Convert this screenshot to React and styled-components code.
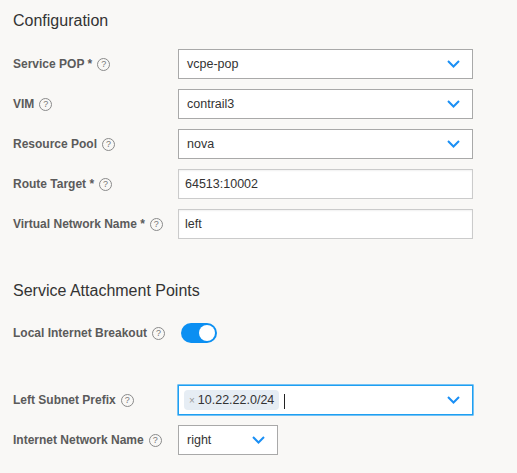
import styled, { createGlobalStyle } from "styled-components";

const GlobalStyle = createGlobalStyle`
  html, body {
    margin: 0;
    padding: 0;
    background: #f9f8f6;
    font-family: "Liberation Sans", Arial, sans-serif;
  }
`;

const Page = styled.div`
  padding: 11px 0 0 13px;
  width: 517px;
  box-sizing: border-box;
`;

const SectionTitle = styled.div`
  font-size: 16px;
  line-height: 20px;
  color: #333;
  margin-bottom: ${(p) => p.$gap || 18}px;
`;

const Rows = styled.div`
  display: flex;
  flex-direction: column;
  gap: 10px;
`;

const Row = styled.div`
  display: flex;
  align-items: center;
  height: 30px;
  margin-top: ${(p) => p.$top || 0}px;
`;

const Label = styled.div`
  width: 165px;
  flex-shrink: 0;
  display: flex;
  align-items: center;
  gap: 5px;
  font-size: 12px;
  font-weight: bold;
  color: #5b5b5b;
`;

const Help = styled.span`
  width: 11px;
  height: 11px;
  border: 1px solid #8a8a8a;
  border-radius: 50%;
  display: inline-flex;
  align-items: center;
  justify-content: center;
  font-size: 9px;
  font-weight: normal;
  color: #777;
`;

const Select = styled.div`
  box-sizing: border-box;
  width: ${(p) => p.$w || 295}px;
  height: 30px;
  background: #fff;
  border: 1px solid ${(p) => (p.$focus ? "#1e9ff2" : "#a9a9a9")};
  box-shadow: ${(p) => (p.$focus ? "0 0 0 0.6px #1e9ff2" : "none")};
  display: flex;
  align-items: center;
  padding: 0 12px 0 ${(p) => p.$pl || 8}px;
  font-size: 12.5px;
  color: #333;
`;

const Value = styled.span`
  flex: 1;
  display: flex;
  align-items: center;
`;

const TextInput = styled.div`
  box-sizing: border-box;
  width: 295px;
  height: 30px;
  background: #fff;
  border: 1px solid #cbcbcb;
  box-shadow: inset 0 1px 2px rgba(0, 0, 0, 0.06);
  display: flex;
  align-items: center;
  padding: 0 6px;
  font-size: 12.5px;
  color: #333;
`;

const Tag = styled.span`
  display: inline-flex;
  align-items: center;
  gap: 3px;
  height: 20px;
  padding: 0 5px 0 5px;
  background: #e6edf4;
  border-radius: 4px;
  font-size: 12.5px;
  color: #333;
`;

const TagX = styled.span`
  font-size: 10px;
  color: #999;
`;

const Caret = styled.span`
  width: 1px;
  height: 15px;
  background: #222;
  margin-left: 5px;
  margin-top: 3px;
`;

const Toggle = styled.div`
  width: 36px;
  height: 20px;
  border-radius: 10px;
  background: #0b8ff2;
  margin-left: 3px;
  display: flex;
  align-items: center;
  justify-content: flex-end;
  padding: 0 2px;
  box-sizing: border-box;
`;

const Knob = styled.div`
  width: 16px;
  height: 16px;
  border-radius: 50%;
  background: #fff;
`;

const Chevron = () => (
  <svg width="13" height="8" viewBox="0 0 13 8">
    <polyline points="1,1 6.5,6.5 12,1" fill="none" stroke="#1a8ff5" strokeWidth="2" />
  </svg>
);

const FieldLabel = ({ children }) => (
  <Label>
    <span>{children}</span>
    <Help>?</Help>
  </Label>
);

export default function App() {
  return (
    <>
      <GlobalStyle />
      <Page>
        <SectionTitle>Configuration</SectionTitle>
        <Rows>
          <Row>
            <FieldLabel>Service POP *</FieldLabel>
            <Select>
              <Value>vcpe-pop</Value>
              <Chevron />
            </Select>
          </Row>
          <Row>
            <FieldLabel>VIM</FieldLabel>
            <Select>
              <Value>contrail3</Value>
              <Chevron />
            </Select>
          </Row>
          <Row>
            <FieldLabel>Resource Pool</FieldLabel>
            <Select>
              <Value>nova</Value>
              <Chevron />
            </Select>
          </Row>
          <Row>
            <FieldLabel>Route Target *</FieldLabel>
            <TextInput>64513:10002</TextInput>
          </Row>
          <Row>
            <FieldLabel>Virtual Network Name *</FieldLabel>
            <TextInput>left</TextInput>
          </Row>
        </Rows>

        <SectionTitle style={{ marginTop: 42 }} $gap={17}>
          Service Attachment Points
        </SectionTitle>
        <Rows>
          <Row>
            <FieldLabel>Local Internet Breakout</FieldLabel>
            <Toggle>
              <Knob />
            </Toggle>
          </Row>
          <Row $top={27}>
            <FieldLabel>Left Subnet Prefix</FieldLabel>
            <Select $focus $pl={5}>
              <Value>
                <Tag>
                  <TagX>×</TagX>10.22.22.0/24
                </Tag>
                <Caret />
              </Value>
              <Chevron />
            </Select>
          </Row>
          <Row>
            <FieldLabel>Internet Network Name</FieldLabel>
            <Select $w={100}>
              <Value>right</Value>
              <Chevron />
            </Select>
          </Row>
        </Rows>
      </Page>
    </>
  );
}
